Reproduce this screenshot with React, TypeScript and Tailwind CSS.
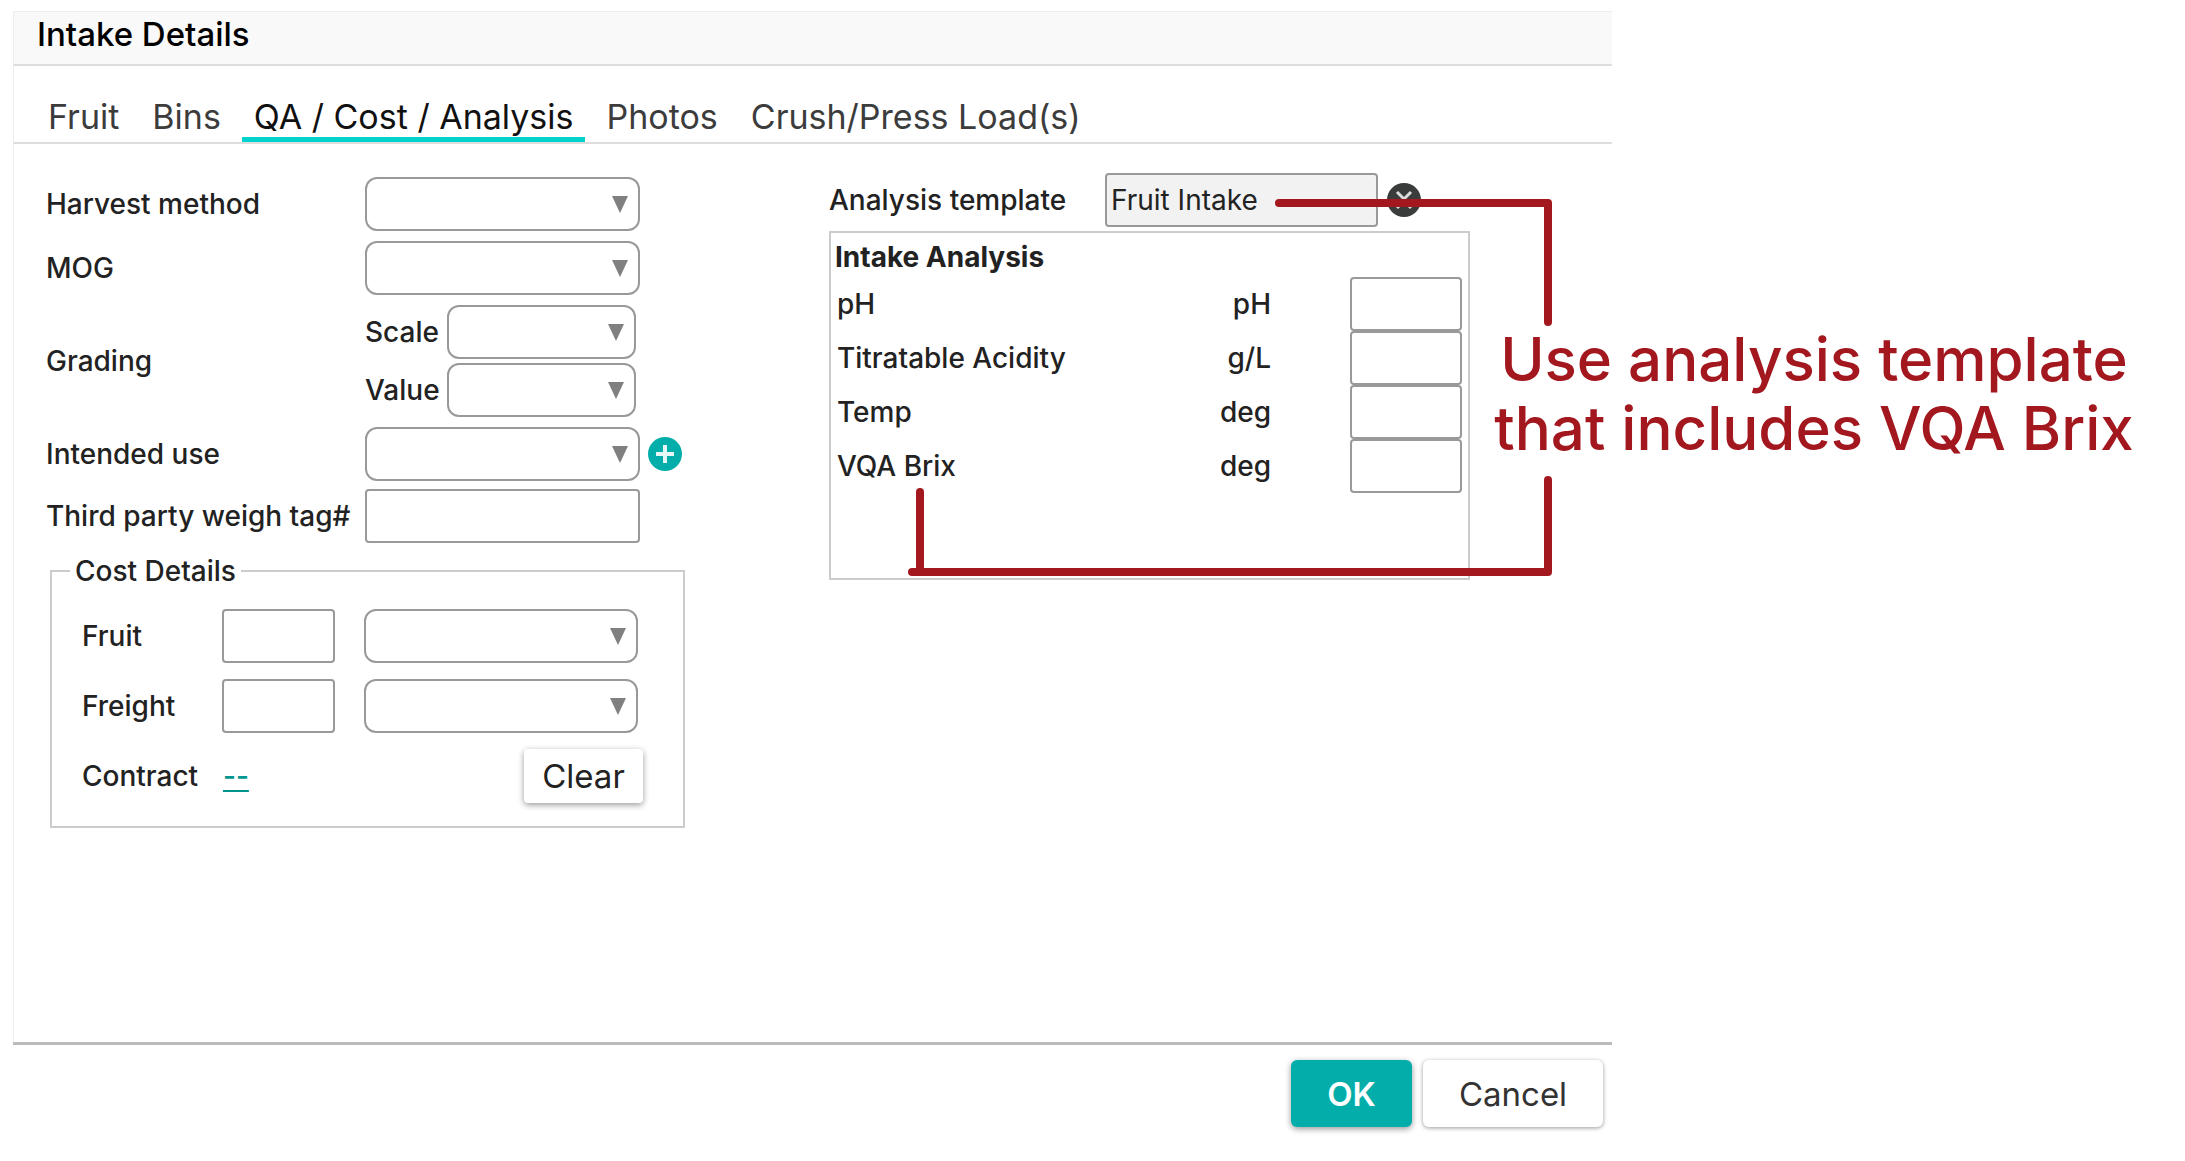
import React, { useState } from "react";

interface Measure {
  id: string;
  name: string;
  unit: string;
}

const tabs = [
  "Fruit",
  "Bins",
  "QA / Cost / Analysis",
  "Photos",
  "Crush/Press Load(s)",
];

const measures: Measure[] = [
  { id: "ph", name: "pH", unit: "pH" },
  { id: "ta", name: "Titratable Acidity", unit: "g/L" },
  { id: "temp", name: "Temp", unit: "deg" },
  { id: "vqa-brix", name: "VQA Brix", unit: "deg" },
];

const textBox =
  "h-[54px] rounded-[4px] border-2 border-[#999] bg-white px-1.5 outline-none";

function Dropdown({
  id,
  className = "",
  ariaLabel,
}: {
  id: string;
  className?: string;
  ariaLabel?: string;
}) {
  return (
    <div className={`relative h-[54px] ${className}`}>
      <select
        id={id}
        aria-label={ariaLabel}
        className="h-full w-full appearance-none rounded-xl border-2 border-[#999] bg-white px-3 outline-none"
      />
      <svg
        viewBox="0 0 16 17"
        className="pointer-events-none absolute top-[19px] right-3 h-[17px] w-4"
      >
        <path d="M0 0H16L8 17Z" fill="#808080" />
      </svg>
    </div>
  );
}

function FieldRow({
  label,
  htmlFor,
  children,
}: {
  label: string;
  htmlFor: string;
  children: React.ReactNode;
}) {
  return (
    <div className="flex items-center">
      <label htmlFor={htmlFor} className="w-[319px] whitespace-nowrap">
        {label}
      </label>
      {children}
    </div>
  );
}

function CostRow({ label, id }: { label: string; id: string }) {
  return (
    <div className="flex items-center">
      <label htmlFor={id} className="w-[140px]">
        {label}
      </label>
      <input id={id} type="text" className={`${textBox} w-[113px]`} />
      <Dropdown
        id={`${id}-unit`}
        ariaLabel={`${label} unit`}
        className="ml-[29px] w-[274px]"
      />
    </div>
  );
}

function CostDetails() {
  return (
    <fieldset className="ml-1 w-[635px] border-2 border-[#ccc] pr-10 pb-[23px] pl-[30px]">
      <legend className="-ml-[12px] px-[5px] leading-9">Cost Details</legend>
      <div className="mt-[20px] flex flex-col gap-4">
        <CostRow label="Fruit" id="cost-fruit" />
        <CostRow label="Freight" id="cost-freight" />
        <div className="flex items-center">
          <span className="w-[141px]">Contract</span>
          <a
            href="#contract"
            className="text-[#00968f] underline decoration-2 underline-offset-4"
          >
            --
          </a>
          <button
            type="button"
            className="ml-auto h-[54px] w-[119px] rounded-[4px] bg-white text-[33px] font-normal shadow-[0_2px_6px_rgba(0,0,0,0.4)]"
          >
            Clear
          </button>
        </div>
      </div>
    </fieldset>
  );
}

// Red connectors and note drawn over the analysis block
function Callout() {
  return (
    <>
      <svg
        viewBox="0 0 740 420"
        className="pointer-events-none absolute top-0 left-0 h-[420px] w-[740px]"
        fill="none"
        stroke="#a3171e"
        strokeWidth="8"
        strokeLinecap="round"
        strokeLinejoin="round"
      >
        <path d="M450 30H719V149" />
        <path d="M91 319V399M83 399H719V307" />
      </svg>
      <p className="absolute top-[152px] left-[635px] w-[700px] text-center text-[60px] leading-[69px] font-medium whitespace-nowrap text-[#a3171e]">
        Use analysis template
        <br />
        that includes VQA Brix
      </p>
    </>
  );
}

function AnalysisSection() {
  return (
    <section className="relative -mt-1 w-[641px]">
      <div className="flex items-center">
        <label htmlFor="template" className="w-[276px] whitespace-nowrap">
          Analysis template
        </label>
        <input
          id="template"
          type="text"
          readOnly
          value="Fruit Intake"
          className="h-[54px] w-[273px] rounded-[4px] border-2 border-[#999] bg-[#f2f2f2] px-1 font-normal outline-none"
        />
        <button type="button" aria-label="Choose template" className="ml-[9px]">
          <svg viewBox="0 0 34 34" className="size-[34px]">
            <circle cx="17" cy="17" r="17" fill="#3a3b3b" />
            <path
              d="M10 9L17 16L24 9M10 25L17 18L24 25"
              fill="none"
              stroke="#ddd"
              strokeWidth="3"
            />
          </svg>
        </button>
      </div>
      <div className="mt-1 h-[349px] border-2 border-[#ccc] px-1">
        <h2 className="pt-1 leading-10 font-bold">Intake Analysis</h2>
        <table className="w-full">
          <tbody>
            {measures.map((m) => (
              <tr key={m.id}>
                <td className="h-[54px] p-0">
                  <label htmlFor={m.id} className="pl-0.5">
                    {m.name}
                  </label>
                </td>
                <td className="w-[120px] p-0 text-right">{m.unit}</td>
                <td className="w-[193px] p-0 pr-0.5">
                  <input
                    id={m.id}
                    type="text"
                    className={`${textBox} ml-auto block w-[112px]`}
                  />
                </td>
              </tr>
            ))}
          </tbody>
        </table>
      </div>
      <Callout />
    </section>
  );
}

export default function App() {
  const [activeTab, setActiveTab] = useState("QA / Cost / Analysis");

  return (
    <div className="flex min-h-screen overflow-x-hidden bg-white pt-[11px] pr-[573px] pb-[18px] pl-[13px] font-['Inter',sans-serif] text-[28px] leading-9 font-medium text-[#222]">
      <main className="flex min-w-0 flex-1 flex-col">
        <header className="border-t border-b-2 border-l border-t-[#eee] border-b-[#ddd] border-l-[#eee] bg-[#f9f9f9] px-[23px] pt-1 pb-[12px]">
          <h1 className="text-[33px] leading-9 font-medium text-black">
            Intake Details
          </h1>
        </header>

        <nav className="flex gap-[9px] border-b-2 border-l border-b-[#ddd] border-l-[#eee] pt-[31px] pl-[22px]">
          {tabs.map((tab) => (
            <button
              key={tab}
              type="button"
              onClick={() => setActiveTab(tab)}
              className={`border-b-[5px] px-3 text-[34px] leading-10 font-normal whitespace-nowrap ${
                tab === activeTab
                  ? "border-[#00d2cd] text-[#111]"
                  : "border-transparent text-[#3c3c3c]"
              }`}
            >
              {tab}
            </button>
          ))}
        </nav>

        <div className="flex flex-1 items-start gap-[144px] border-l border-[#eee] pt-[33px] pb-6 pl-8">
          <form className="flex w-[639px] shrink-0 flex-col gap-[10px]">
            <FieldRow label="Harvest method" htmlFor="harvest">
              <Dropdown id="harvest" className="w-[275px]" />
            </FieldRow>
            <FieldRow label="MOG" htmlFor="mog">
              <Dropdown id="mog" className="w-[275px]" />
            </FieldRow>
            <FieldRow label="Grading" htmlFor="scale">
              <div className="flex flex-col gap-1">
                <div className="flex items-center">
                  <label htmlFor="scale" className="w-[82px]">
                    Scale
                  </label>
                  <Dropdown id="scale" className="w-[189px]" />
                </div>
                <div className="flex items-center">
                  <label htmlFor="value" className="w-[82px]">
                    Value
                  </label>
                  <Dropdown id="value" className="w-[189px]" />
                </div>
              </div>
            </FieldRow>
            <div className="flex flex-col gap-2">
              <FieldRow label="Intended use" htmlFor="use">
                <Dropdown id="use" className="w-[275px]" />
                <button
                  type="button"
                  aria-label="Add intended use"
                  className="ml-2"
                >
                  <svg viewBox="0 0 34 34" className="size-[34px]">
                    <circle cx="17" cy="17" r="17" fill="#03aeaa" />
                    <path
                      d="M17 8V26M8 17H26"
                      stroke="#e6f7f6"
                      strokeWidth="4"
                      fill="none"
                    />
                  </svg>
                </button>
              </FieldRow>
              <FieldRow label="Third party weigh tag#" htmlFor="weigh-tag">
                <input
                  id="weigh-tag"
                  type="text"
                  className={`${textBox} w-[275px]`}
                />
              </FieldRow>
            </div>
            <CostDetails />
          </form>
          <AnalysisSection />
        </div>

        <footer className="flex justify-end gap-[11px] border-t-[3px] border-[#bbb] pt-[15px] pr-[9px] pb-4 text-[33px]">
          <button
            type="button"
            className="h-[67px] w-[121px] rounded-md bg-[#03aeaa] font-semibold text-white shadow-[0_2px_6px_rgba(0,0,0,0.4)]"
          >
            OK
          </button>
          <button
            type="button"
            className="h-[67px] w-[180px] rounded-md bg-white font-normal text-[#333] shadow-[0_1px_4px_rgba(0,0,0,0.4)]"
          >
            Cancel
          </button>
        </footer>
      </main>
    </div>
  );
}
